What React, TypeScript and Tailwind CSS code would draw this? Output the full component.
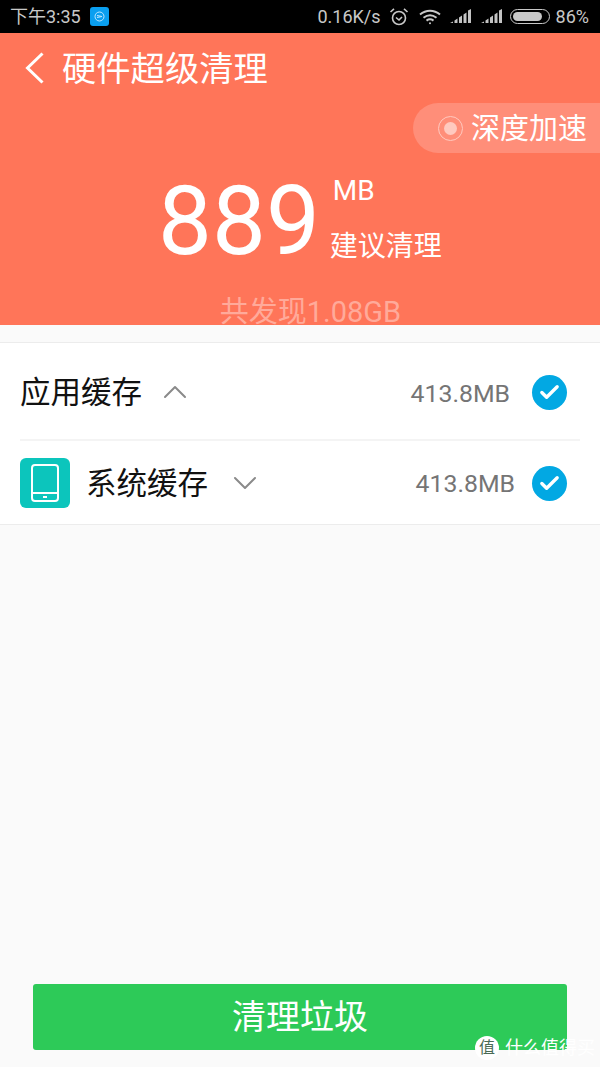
import { ChevronDown, ChevronUp, Check } from "lucide-react";

const cjk = "font-['Roboto','Noto_Sans_CJK_SC',sans-serif]";

const Signal = () => (
  <svg width="21" height="15" viewBox="0 0 21 15" fill="#c4c4c4">
    <path d="M0 14h3v-1.5L0 14zM4.5 14h3V9.5l-3 2zM9 14h3V6.5L9 8.5zM13.5 14h3V3.5l-3 2zM18 14h3V0l-3 1.5z" />
  </svg>
);

const StatusBar = () => (
  <div className="flex h-[33px] items-center bg-black pl-[10px] pr-[11px] text-[18px] text-[#c8c8c8]">
    <span>下午3:35</span>
    <span className="ml-[9px] flex h-[19px] w-[19px] items-center justify-center rounded-[3px] bg-[#0a9ff0]">
      <svg width="11" height="11" viewBox="0 0 11 11" fill="none" stroke="#bfe6ff" strokeWidth="1">
        <circle cx="5.5" cy="5.5" r="4.5" />
        <path d="M3 4.5l5 1-5 1" />
      </svg>
    </span>
    <span className="ml-auto">0.16K/s</span>
    <svg className="ml-[8px]" width="20" height="20" viewBox="0 0 20 20" fill="none" stroke="#c8c8c8" strokeWidth="1.6">
      <circle cx="10" cy="11" r="6.5" />
      <path d="M7 10.5l3 2.5 3-3M1.5 5L5 1.8M18.5 5L15 1.8" />
    </svg>
    <svg className="ml-[10px]" width="22" height="16" viewBox="0 0 22 16" fill="none" stroke="#c8c8c8" strokeWidth="2">
      <path d="M1 5.5c6-5 14-5 20 0M4.5 8.8c4-3.2 9-3.2 13 0M7.5 11.6c2.2-1.6 4.8-1.6 7 0" />
      <circle cx="11" cy="14.2" r="1" fill="#c8c8c8" stroke="none" />
    </svg>
    <span className="ml-[9px] flex items-center"><Signal /></span>
    <span className="ml-[10px] flex items-center"><Signal /></span>
    <span className="ml-[8px] flex h-[15px] w-[40px] items-center rounded-full border border-[#c8c8c8] p-[2px]">
      <span className="h-full w-[86%] rounded-full bg-[#c8c8c8]" />
    </span>
    <span className="ml-[6px]">86%</span>
  </div>
);

const Hero = () => (
  <div className="flex h-[292px] flex-col bg-[#ff7559] text-white">
    <div className="flex h-[70px] items-center pl-[25px]">
      <svg width="19" height="32" viewBox="0 0 19 32" fill="none" stroke="#fff" strokeWidth="3">
        <path d="M17.5 1.5L2.5 16l15 14.5" />
      </svg>
      <h1 className="ml-[18px] mt-[2px] text-[34.3px] leading-none font-normal">硬件超级清理</h1>
    </div>
    <div className="flex justify-end">
      <div className="flex h-[50px] w-[187px] items-center rounded-l-[25px] bg-[#ff8e79] pl-[25px]">
        <span className="flex h-[25px] w-[25px] items-center justify-center rounded-full border-[1.5px] border-[#ffc9bf]">
          <span className="h-[13px] w-[13px] rounded-full bg-[#ffc9bf]" />
        </span>
        <span className="ml-[8px] mt-[2px] text-[29px] leading-none">深度加速</span>
      </div>
    </div>
    <div className="mt-[18px] flex pl-[158px]">
      <span className="text-[96px] leading-[100px] font-normal">889</span>
      <div className="ml-[10px] flex flex-col">
        <span className="ml-[3px] mt-[6px] text-[28px] leading-none">MB</span>
        <span className="mt-[28px] text-[28px] leading-none">建议清理</span>
      </div>
    </div>
    <div className="mt-auto mb-[-2px] pl-[21px] text-center text-[29px] leading-[29px] text-[#ffaa9a]">共发现1.08GB</div>
  </div>
);

const CheckMark = () => (
  <span className="flex h-[35px] w-[35px] items-center justify-center rounded-full bg-[#02a8e3]">
    <Check size={23} strokeWidth={3.5} className="text-white" />
  </span>
);

const CacheList = () => (
  <div className="mt-[17px] border-y border-[#ececec] bg-white pl-[20px] pr-[20px]">
    <div className="flex h-[98px] items-center border-b-2 border-[#f4f4f4] pt-[2px]">
      <span className="mt-[2px] text-[30.5px] leading-none text-[#111]">应用缓存</span>
      <ChevronUp size={40} strokeWidth={1.2} className="ml-[13px] text-[#8a8a8a]" />
      <span className="ml-auto mt-[4px] text-[24.8px] text-[#757575]">413.8MB</span>
      <span className="ml-[22px] mr-[13px] flex"><CheckMark /></span>
    </div>
    <div className="flex h-[83px] items-center">
      <span className="flex h-[50px] w-[50px] items-center justify-center rounded-[6px] bg-[#0cc5bc]">
        <svg width="28" height="38" viewBox="0 0 28 38" fill="none" stroke="#fff" strokeWidth="2">
          <rect x="1" y="1" width="26" height="36" rx="3" />
          <path d="M1 29h26" />
          <rect x="12" y="32" width="4" height="2" fill="#fff" stroke="none" />
        </svg>
      </span>
      <span className="ml-[16px] mt-[4px] text-[30.5px] leading-none text-[#111]">系统缓存</span>
      <ChevronDown size={40} strokeWidth={1.2} className="ml-[17px] text-[#8a8a8a]" />
      <span className="ml-auto mt-[2px] text-[24.8px] text-[#757575]">413.8MB</span>
      <span className="ml-[17px] mr-[13px] mt-[2px] flex"><CheckMark /></span>
    </div>
  </div>
);

const Watermark = () => (
  <div className="absolute bottom-[6px] right-[5px] flex items-center text-[18px] text-white">
    <span className="flex h-[24px] w-[24px] items-center justify-center rounded-full bg-white text-[16px] leading-none text-[#4a6b55]">值</span>
    <span className="ml-[6px]">什么值得买</span>
  </div>
);

export default function App() {
  return (
    <div className={`relative flex h-[1067px] w-[600px] flex-col overflow-hidden bg-[#fafafa] ${cjk}`}>
      <StatusBar />
      <Hero />
      <CacheList />
      <div className="mt-auto px-[33px] pb-[17px]">
        <button className="h-[66px] w-full rounded-[3px] bg-[#2dca58] text-[34px] text-white">清理垃圾</button>
      </div>
      <Watermark />
    </div>
  );
}
